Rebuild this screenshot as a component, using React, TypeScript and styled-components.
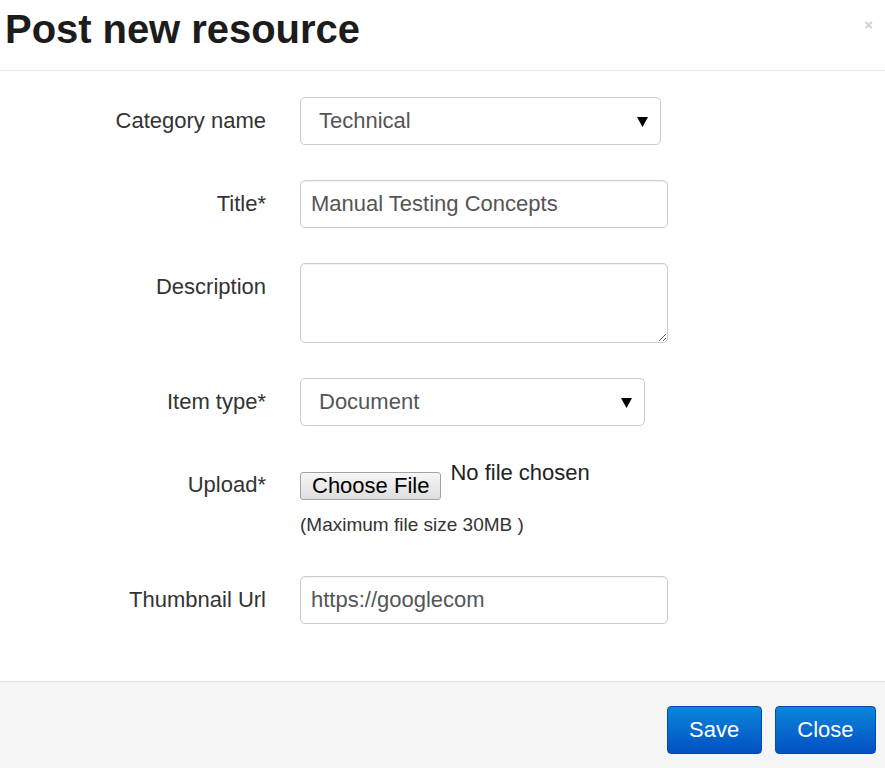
import React from "react";
import styled, { createGlobalStyle } from "styled-components";

const Global = createGlobalStyle`
  html, body { margin: 0; padding: 0; background: #fff; }
  body { font-family: "Liberation Sans", Arial, sans-serif; }
  * { box-sizing: border-box; }
`;

const Modal = styled.div`
  width: 885px;
  height: 768px;
  display: flex;
  flex-direction: column;
  background: #fff;
  overflow: hidden;
`;

const Header = styled.div`
  height: 71px;
  display: flex;
  justify-content: space-between;
  align-items: flex-start;
  padding: 7px 12px 0 5px;
  border-bottom: 1px solid #e5e5e5;
`;

const Title = styled.h3`
  margin: 0;
  font-size: 40px;
  line-height: 44px;
  font-weight: bold;
  color: #1c1c1c;
  letter-spacing: -0.05px;
`;

const CloseX = styled.span`
  margin-top: 10px;
  font-size: 15px;
  line-height: 16px;
  font-weight: bold;
  color: #cfcfcf;
`;

const Body = styled.div`
  flex: 1;
  padding: 26px 0 0 0;
`;

const Form = styled.div`
  display: grid;
  grid-template-columns: 266px 1fr;
  column-gap: 34px;
  row-gap: 35px;
`;

const Label = styled.div`
  text-align: right;
  font-size: 22px;
  line-height: 48px;
  color: #333;
`;

const Field = styled.div`
  display: flex;
  flex-direction: column;
  align-items: flex-start;
`;

const TextInput = styled.input<{ $w: number }>`
  width: ${(p) => p.$w}px;
  height: 48px;
  border: 1px solid #cccccc;
  border-radius: 5px;
  padding: 0 10px;
  font-family: inherit;
  font-size: 22px;
  color: #555;
  background: #fff;
  box-shadow: inset 0 1px 1px rgba(0, 0, 0, 0.05);
  outline: none;
`;

const TextArea = styled.textarea<{ $w: number }>`
  width: ${(p) => p.$w}px;
  height: 80px;
  border: 1px solid #cccccc;
  border-radius: 5px;
  padding: 8px 10px;
  font-family: inherit;
  font-size: 22px;
  color: #555;
  box-shadow: inset 0 1px 1px rgba(0, 0, 0, 0.05);
  outline: none;
  display: block;
`;

const SelectBox = styled.div<{ $w: number }>`
  width: ${(p) => p.$w}px;
  height: 48px;
  border: 1px solid #cccccc;
  border-radius: 5px;
  padding: 0 12px 0 18px;
  display: flex;
  align-items: center;
  justify-content: space-between;
  font-size: 22px;
  color: #555;
  background: #fff;
`;

const Arrow = styled.svg`
  width: 11px;
  height: 11px;
  display: block;
`;

const FileLine = styled.div`
  display: flex;
  align-items: flex-start;
  gap: 9px;
`;

const FileButton = styled.button`
  margin-top: 11px;
  height: 28px;
  padding: 0 11px;
  border: 1px solid #a3a3a3;
  border-radius: 3px;
  background: linear-gradient(#f6f6f6, #dedede);
  font-family: inherit;
  font-size: 22px;
  line-height: 26px;
  color: #000;
`;

const FileStatus = styled.span`
  font-size: 22px;
  line-height: 24px;
  color: #222;
`;

const Help = styled.div`
  margin: 13px 0 4px;
  font-size: 19px;
  line-height: 24px;
  color: #333;
`;

const Footer = styled.div`
  height: 87px;
  border-top: 1px solid #e0e0e0;
  background: #f5f5f5;
  display: flex;
  justify-content: flex-end;
  align-items: flex-start;
  gap: 13px;
  padding: 24px 9px 0 0;
`;

const PrimaryButton = styled.button`
  height: 48px;
  padding: 0 21.5px;
  border: 1px solid #0449ad;
  border-radius: 4px;
  background: linear-gradient(#0b86da, #0350c2);
  color: #fff;
  font-family: inherit;
  font-size: 22px;
  line-height: 46px;
`;

const DownArrow = () => (
  <Arrow viewBox="0 0 11 11">
    <polygon points="0,1 11,1 5.5,11" fill="#000" />
  </Arrow>
);

export default function App() {
  return (
    <Modal>
      <Global />
      <Header>
        <Title>Post new resource</Title>
        <CloseX>×</CloseX>
      </Header>
      <Body>
        <Form>
          <Label>Category name</Label>
          <Field>
            <SelectBox $w={361}>
              <span>Technical</span>
              <DownArrow />
            </SelectBox>
          </Field>

          <Label>Title*</Label>
          <Field>
            <TextInput $w={368} defaultValue="Manual Testing Concepts" />
          </Field>

          <Label>Description</Label>
          <Field>
            <TextArea $w={368} />
          </Field>

          <Label>Item type*</Label>
          <Field>
            <SelectBox $w={345}>
              <span>Document</span>
              <DownArrow />
            </SelectBox>
          </Field>

          <Label>Upload*</Label>
          <Field>
            <FileLine>
              <FileButton>Choose File</FileButton>
              <FileStatus>No file chosen</FileStatus>
            </FileLine>
            <Help>(Maximum file size 30MB )</Help>
          </Field>

          <Label>Thumbnail Url</Label>
          <Field>
            <TextInput $w={368} defaultValue="https://googlecom" />
          </Field>
        </Form>
      </Body>
      <Footer>
        <PrimaryButton>Save</PrimaryButton>
        <PrimaryButton>Close</PrimaryButton>
      </Footer>
    </Modal>
  );
}
